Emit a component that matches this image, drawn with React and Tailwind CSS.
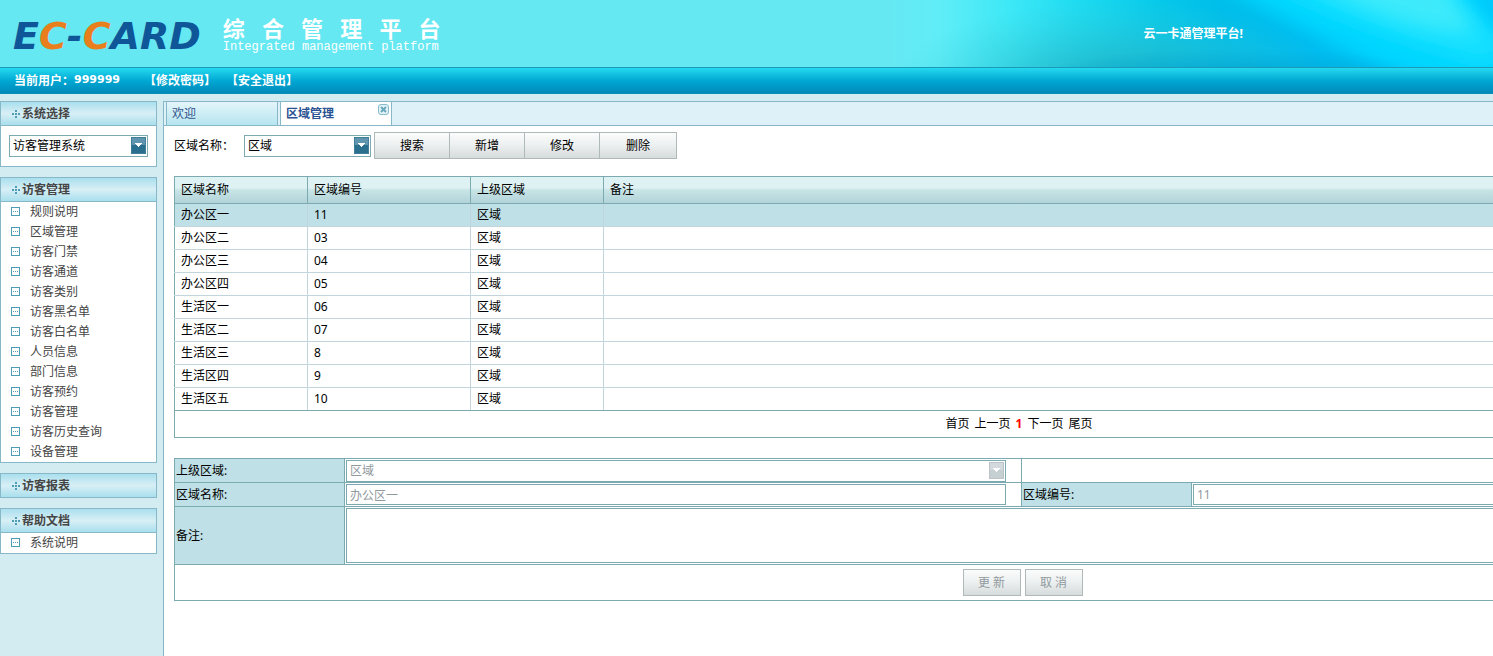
import React, { useState } from "react";

const sans = "font-['Noto_Sans','Noto_Sans_CJK_SC',sans-serif]";

const menu = [
  "规则说明", "区域管理", "访客门禁", "访客通道", "访客类别", "访客黑名单", "访客白名单",
  "人员信息", "部门信息", "访客预约", "访客管理", "访客历史查询", "设备管理",
];

const rows = [
  ["办公区一", "11"], ["办公区二", "03"], ["办公区三", "04"], ["办公区四", "05"],
  ["生活区一", "06"], ["生活区二", "07"], ["生活区三", "8"], ["生活区四", "9"], ["生活区五", "10"],
];

function HeaderGlow() {
  return (
    <svg className="absolute right-0 top-0 h-full w-[603px]" viewBox="0 0 603 67" preserveAspectRatio="none" aria-hidden="true">
      <defs>
        <linearGradient id="base" x1="0" x2="1" y1="0" y2="0">
          <stop offset="0" stopColor="#65e8f2" />
          <stop offset="0.08" stopColor="#60edf7" />
          <stop offset="0.2" stopColor="#3de8f6" />
          <stop offset="0.32" stopColor="#1cdaf0" />
          <stop offset="0.45" stopColor="#06c8e9" />
          <stop offset="0.55" stopColor="#00bee9" />
          <stop offset="0.7" stopColor="#00bbee" />
          <stop offset="1" stopColor="#00c4fa" />
        </linearGradient>
        <radialGradient id="teal" gradientUnits="userSpaceOnUse" cx="0" cy="0" r="1" gradientTransform="translate(225 85) scale(220 85)">
          <stop offset="0" stopColor="#1ea8ba" stopOpacity="0.85" />
          <stop offset="0.45" stopColor="#2ab6c6" stopOpacity="0.5" />
          <stop offset="1" stopColor="#3ccbd6" stopOpacity="0" />
        </radialGradient>
        <radialGradient id="shade" gradientUnits="userSpaceOnUse" cx="0" cy="0" r="1" gradientTransform="translate(350 76) scale(200 28)">
          <stop offset="0" stopColor="#009fd0" stopOpacity="0.8" />
          <stop offset="1" stopColor="#00a8d8" stopOpacity="0" />
        </radialGradient>
        <filter id="soft" x="-20%" y="-50%" width="140%" height="200%"><feGaussianBlur stdDeviation="6" /></filter>
        <filter id="softer" x="-20%" y="-50%" width="140%" height="200%"><feGaussianBlur stdDeviation="9" /></filter>
      </defs>
      <rect width="603" height="67" fill="url(#base)" />
      <rect width="603" height="67" fill="url(#teal)" />
      <path d="M320 -20 L640 -20 L640 100 L540 90 Q440 45 320 -20Z" fill="#00d6ff" filter="url(#softer)" />
      <path d="M370 -20 L560 -20 L625 50 L590 62 Q480 36 370 -20Z" fill="#12e0ff" filter="url(#softer)" />
      <path d="M415 -24 L550 -24 L585 34 Q500 30 415 -24Z" fill="#44ecfa" opacity="0.85" filter="url(#softer)" />
      <path d="M575 -12 L620 -12 L630 60Z" fill="#00c6fa" opacity="0.8" filter="url(#softer)" />
      <rect width="603" height="67" fill="url(#shade)" />
    </svg>
  );
}

function PlusDots() {
  return (
    <svg className="mr-[2px] h-2 w-2" viewBox="0 0 8 8" fill="#4f9cb5" shapeRendering="crispEdges" aria-hidden="true">
      <path d="M3 0h2v2h-2zM0 3h2v2h-2zM3 3h2v2h-2zM6 3h2v2h-2zM3 6h2v2h-2z" />
    </svg>
  );
}

function LeafIcon() {
  return (
    <svg className="h-[10px] w-[9px]" viewBox="0 0 9 10" shapeRendering="crispEdges" aria-hidden="true">
      <path d="M0 0h9v9h-9z" fill="#4f9cb5" />
      <path d="M1 1h7v7h-7z" fill="#fff" />
      <path d="M2 4h1v1h-1zM4 4h1v1h-1zM6 4h1v1h-1z" fill="#4f9cb5" />
    </svg>
  );
}

function Panel({ title, children }) {
  return (
    <section>
      <h2 className="flex h-[25px] items-center border border-[#86b8c8] bg-linear-to-b from-[#a9dfee] via-[#d8eff5] to-[#a9dfee] pl-[11px] text-xs font-bold text-[#454545]">
        <PlusDots />
        {title}
      </h2>
      {children && <div className="border border-t-0 border-[#86b8c8] bg-white">{children}</div>}
    </section>
  );
}

function MenuItem({ children }) {
  return (
    <li>
      <a href="#" className="flex h-5 items-center gap-[10px] pl-[10px] text-xs text-[#454545]">
        <LeafIcon />
        {children}
      </a>
    </li>
  );
}

function Select({ label, options, className, disabled }) {
  return (
    <div className={"relative " + className}>
      <select
        aria-label={label}
        disabled={disabled}
        className="block h-[22px] w-full appearance-none border border-[#7babb0] bg-white pl-[3px] pr-5 text-xs text-black opacity-100 disabled:text-[#8f9a9e]"
      >
        {options.map((o) => <option key={o}>{o}</option>)}
      </select>
      <svg className="pointer-events-none absolute right-[2px] top-[2px] h-[17px] w-[15px]" viewBox="0 0 15 17" shapeRendering="crispEdges" aria-hidden="true">
        <rect width="15" height="17" fill={disabled ? "#bcc2c6" : "#3f7f98"} />
        <rect x="1" y="1" width="13" height="7" fill={disabled ? "#d3d9dc" : "#5f95ae"} />
        <rect x="1" y="8" width="13" height="8" fill={disabled ? "#c6cfd2" : "#2a6f8d"} />
        <path d="M4 6h7v1h-1v1h-1v1h-1v1h-1v-1h-1v-1h-1v-1h-1z" fill="#fff" />
      </svg>
    </div>
  );
}

const buttonLook = "h-[27px] border border-[#b0b9ba] bg-linear-to-b from-[#fbfcfc] from-0% via-[#eef1f1] via-45% to-[#d6dbdb] text-xs";

export default function App() {
  const [selected, setSelected] = useState(0);
  const th = "border border-[#7babb0] px-[6px] text-left font-normal";
  const td = "border border-[#c3d5dc] px-[6px] first:border-l-[#7babb0]";
  const cell = "border border-[#7babb0]";
  const labelCell = cell + " bg-[#bfe0e6] px-[1px] text-left font-normal";
  const field = "block border border-[#7babb0] bg-white px-[3px] text-xs text-[#8f9a9e]";

  return (
    <div className={"flex min-h-screen flex-col overflow-hidden bg-[#d3ecf1] text-xs text-black " + sans}>
      <header>
        <div className="relative flex h-[67px] items-center bg-[#65e8f2]">
          <HeaderGlow />
          <div className="relative pl-[13px] pt-1 font-['DejaVu_Sans'] text-[38px] font-bold italic leading-none text-[#0f5699]">
            E<span className="text-[#e87e1c]">C</span>-<span className="text-[#e87e1c]">C</span>ARD
          </div>
          <div className="relative ml-[22px] pt-1 text-white">
            <h1 className="whitespace-pre text-[22px] font-bold leading-[22px]">综   合   管   理   平   台</h1>
            <p className="font-['Liberation_Mono',monospace] text-xs leading-4">Integrated management platform</p>
          </div>
          <p className="relative ml-auto mr-[250px] font-bold text-white">云一卡通管理平台!</p>
        </div>
        <div className="flex h-[27px] items-center border-y border-t-[#1a9ab8] border-b-[#0a8db4] bg-linear-to-b from-[#24d9ef] via-[#00a9d3] to-[#0089bb] pl-[14px] font-bold text-white">
          <span>当前用户：</span>
          <span className="font-['DejaVu_Sans',sans-serif] text-[11px]">999999</span>
          <nav className="ml-6 flex gap-[10px]">
            <a href="#">【修改密码】</a>
            <a href="#">【安全退出】</a>
          </nav>
        </div>
      </header>

      <div className="flex grow gap-[6px] pt-[7px]">
        <aside className="flex w-[157px] shrink-0 flex-col gap-[10px]">
          <Panel title="系统选择">
            <div className="px-2 py-[9px]">
              <Select label="系统选择" options={["访客管理系统"]} className="w-full" />
            </div>
          </Panel>
          <Panel title="访客管理">
            <ul>{menu.map((m) => <MenuItem key={m}>{m}</MenuItem>)}</ul>
          </Panel>
          <Panel title="访客报表" />
          <Panel title="帮助文档">
            <ul><MenuItem>系统说明</MenuItem></ul>
          </Panel>
        </aside>

        <main className="min-w-0 grow border-l border-t border-[#86b8c8] bg-white">
          <div className="flex h-6 gap-[2px] border-b border-[#86b8c8] bg-[#def1f8] pl-[2px]">
            <button type="button" className="w-[112px] border-x border-[#86b8c8] bg-linear-to-b from-[#e4f5fa] to-[#b6e5f0] px-[5px] text-left text-[#34548c]">欢迎</button>
            <div className="relative flex w-[112px] border-x border-[#86b8c8] bg-white">
              <button type="button" className="grow px-[5px] text-left font-bold text-[#2a5292]">区域管理</button>
              <button type="button" aria-label="关闭" className="absolute right-[2px] top-[2px]">
                <svg className="h-[11px] w-[11px]" viewBox="0 0 11 11" aria-hidden="true">
                  <rect x="0.5" y="0.5" width="10" height="10" rx="2.5" fill="#e3f3f6" stroke="#84bccb" />
                  <path d="M3 3l5 5M8 3l-5 5" stroke="#6aa9bd" strokeWidth="2" />
                </svg>
              </button>
            </div>
          </div>

          <div className="pl-[10px] pt-[6px]">
            <div className="flex items-center">
              <span className="w-[70px]">区域名称：</span>
              <Select label="区域名称" options={["区域"]} className="w-[127px]" />
              <div className="ml-[3px] flex">
                {["搜索", "新增", "修改", "删除"].map((b) => (
                  <button key={b} type="button" className={buttonLook + " w-[75px] border-r-0 last:w-[78px] last:border-r"}>{b}</button>
                ))}
              </div>
            </div>

            <div className="mt-[17px] w-[1690px]">
              <table className="w-full table-fixed border-collapse border border-[#7babb0]">
                <colgroup>
                  <col className="w-[133px]" /><col className="w-[163px]" /><col className="w-[133px]" /><col />
                </colgroup>
                <thead>
                  <tr className="h-[27px] bg-linear-to-b from-[#dff2f3] from-40% via-[#c8e4e6] via-48% to-[#b0d2d8]">
                    <th className={th}>区域名称</th><th className={th}>区域编号</th><th className={th}>上级区域</th><th className={th}>备注</th>
                  </tr>
                </thead>
                <tbody>
                  {rows.map(([name, code], i) => (
                    <tr
                      key={name}
                      onClick={() => setSelected(i)}
                      className={"h-[23px] last:*:border-b-[#7babb0] " + (i === selected ? "bg-[#bfe0e6]" : "bg-white")}
                    >
                      <td className={td}>{name}</td><td className={td}>{code}</td><td className={td}>区域</td><td className={td}></td>
                    </tr>
                  ))}
                </tbody>
                <tfoot>
                  <tr className="h-[27px]">
                    <td colSpan={4} className={cell}>
                      <nav className="flex justify-center gap-[5px]">
                        <a href="#">首页</a><a href="#">上一页</a><span className="font-bold text-[#f00]">1</span><a href="#">下一页</a><a href="#">尾页</a>
                      </nav>
                    </td>
                  </tr>
                </tfoot>
              </table>

              <table className="mt-5 w-full table-fixed border-collapse">
                <colgroup>
                  <col className="w-[170px]" /><col className="w-[677px]" /><col className="w-[170px]" /><col />
                </colgroup>
                <tbody>
                  <tr className="h-6">
                    <th className={labelCell}>上级区域:</th>
                    <td className={cell + " p-0 pl-[1px]"}><Select label="上级区域" options={["区域"]} className="w-[660px]" disabled /></td>
                    <td className={cell} colSpan={2}></td>
                  </tr>
                  <tr className="h-6">
                    <th className={labelCell}><label htmlFor="area-name">区域名称:</label></th>
                    <td className={cell + " p-0 pl-[1px]"}><input id="area-name" disabled defaultValue="办公区一" className={field + " h-[21px] w-[660px]"} /></td>
                    <th className={labelCell}><label htmlFor="area-code">区域编号:</label></th>
                    <td className={cell + " p-0 pl-[1px]"}><input id="area-code" disabled defaultValue="11" className={field + " h-[21px] w-[660px]"} /></td>
                  </tr>
                  <tr className="h-[58px]">
                    <th className={labelCell}><label htmlFor="remark">备注:</label></th>
                    <td className={cell + " p-0 px-[1px]"} colSpan={3}><textarea id="remark" disabled className={field + " h-[55px] w-full resize-none"} /></td>
                  </tr>
                  <tr className="h-9">
                    <td className={cell} colSpan={4}>
                      <div className="flex justify-center gap-1 pl-[7px]">
                        <button type="button" disabled className={buttonLook + " w-[58px] text-[#8f9a9e]"}>更 新</button>
                        <button type="button" disabled className={buttonLook + " w-[58px] text-[#8f9a9e]"}>取 消</button>
                      </div>
                    </td>
                  </tr>
                </tbody>
              </table>
            </div>
          </div>
        </main>
      </div>
    </div>
  );
}
